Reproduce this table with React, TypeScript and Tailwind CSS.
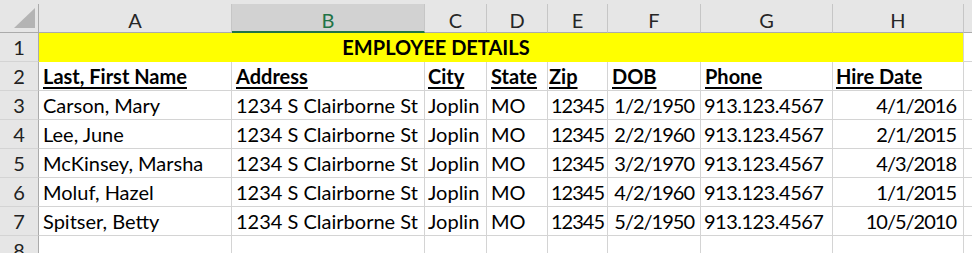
import React from 'react'

// Column widths include the 1px right gridline
const COLS = [
  { key: 'A', w: 'w-[193px]' },
  { key: 'B', w: 'w-[193px]' },
  { key: 'C', w: 'w-[62px]' },
  { key: 'D', w: 'w-[61px]' },
  { key: 'E', w: 'w-[60px]' },
  { key: 'F', w: 'w-[93px]' },
  { key: 'G', w: 'w-[132px]' },
  { key: 'H', w: 'w-[131px]' },
]

// per-column text alignment / padding (Lato digits run wider than Calibri's, so tighten them)
const ALIGN = [
  'justify-start pl-[4px]',
  'justify-start pl-[4px]',
  'justify-start pl-[3px]',
  'justify-start pl-[4px]',
  'justify-end pr-[3px] tracking-[-1px]',
  'justify-end pr-[6px] tracking-[-1px]',
  'justify-start pl-[3px] tracking-[-0.5px]',
  'justify-end pr-[7px] tracking-[-1px]',
]

const HEADINGS = ['Last, First Name', 'Address', 'City', 'State', 'Zip', 'DOB', 'Phone', 'Hire Date']
const HEAD_ALIGN = [
  'pl-[4px]',
  'pl-[4px]',
  'pl-[3px]',
  'pl-[4px]',
  'pl-[1px]',
  'pl-[4px]',
  'pl-[4px]',
  'pl-[3px]',
]

const EMPLOYEES = [
  ['Carson, Mary', '1234 S Clairborne St', 'Joplin', 'MO', '12345', '1/2/1950', '913.123.4567', '4/1/2016'],
  ['Lee, June', '1234 S Clairborne St', 'Joplin', 'MO', '12345', '2/2/1960', '913.123.4567', '2/1/2015'],
  ['McKinsey, Marsha', '1234 S Clairborne St', 'Joplin', 'MO', '12345', '3/2/1970', '913.123.4567', '4/3/2018'],
  ['Moluf, Hazel', '1234 S Clairborne St', 'Joplin', 'MO', '12345', '4/2/1960', '913.123.4567', '1/1/2015'],
  ['Spitser, Betty', '1234 S Clairborne St', 'Joplin', 'MO', '12345', '5/2/1950', '913.123.4567', '10/5/2010'],
]

function RowNum({ n }: { n: number }) {
  return (
    <div className="w-[39px] shrink-0 h-[29px] bg-[#e6e6e6] border-r border-r-[#ababab] border-b border-b-[#d4d4d4] flex items-center justify-center text-[#222] leading-[28px]">
      {n}
    </div>
  )
}

export default function App() {
  return (
    <div
      className="w-[972px] h-[253px] overflow-hidden bg-white text-[20px] text-black"
      style={{ fontFamily: 'Lato, "Noto Sans", sans-serif' }}
    >
      {/* ── Column headers ─────────────────────────────── */}
      <div className="flex h-[33px] bg-[#e6e6e6] pt-[4px]">
        <div className="relative w-[39px] shrink-0 h-[29px] border-r border-r-[#ababab] border-b border-b-[#ababab]">
          <svg className="absolute left-[14px] top-[4px]" width="22" height="21" viewBox="0 0 22 21">
            <polygon points="21,0 21,20 0,20" fill="#b4b4b4" />
          </svg>
        </div>
        {COLS.map((c) => (
          <div
            key={c.key}
            className={`${c.w} shrink-0 h-[29px] flex justify-center pt-[5px] leading-[23px] border-r border-r-[#c6c6c6] ${
              c.key === 'B'
                ? 'bg-[#d2d2d2] border-b-2 border-b-[#217346] text-[#217346]'
                : 'border-b border-b-[#ababab] text-[#262626]'
            }`}
          >
            {c.key}
          </div>
        ))}
        <div className="flex-1 h-[29px] border-b border-b-[#ababab]" />
      </div>

      {/* ── Row 1: merged title ────────────────────────── */}
      <div className="flex h-[29px]">
        <RowNum n={1} />
        <div className="w-[925px] shrink-0 h-[29px] bg-[#ffff00] border-r border-r-[#d4d4d4]">
          <div className="w-[794px] text-center font-bold leading-[29px]">EMPLOYEE DETAILS</div>
        </div>
        <div className="flex-1 border-b border-b-[#d4d4d4]" />
      </div>

      {/* ── Row 2: headings ────────────────────────────── */}
      <div className="flex h-[29px]">
        <RowNum n={2} />
        {COLS.map((c, i) => (
          <div
            key={c.key}
            className={`${c.w} shrink-0 h-[29px] flex items-center whitespace-nowrap border-r border-b border-[#d4d4d4] leading-[28px] ${HEAD_ALIGN[i]}`}
          >
            <span className="font-bold underline decoration-2 underline-offset-[3px]">{HEADINGS[i]}</span>
          </div>
        ))}
        <div className="flex-1 border-b border-b-[#d4d4d4]" />
      </div>

      {/* ── Data rows ──────────────────────────────────── */}
      {EMPLOYEES.map((row, r) => (
        <div key={r} className="flex h-[29px]">
          <RowNum n={r + 3} />
          {row.map((val, i) => (
            <div
              key={i}
              className={`${COLS[i].w} shrink-0 h-[29px] flex items-center whitespace-nowrap border-r border-b border-[#d4d4d4] leading-[28px] ${ALIGN[i]}`}
            >
              {val}
            </div>
          ))}
          <div className="flex-1 border-b border-b-[#d4d4d4]" />
        </div>
      ))}

      {/* ── Row 8 (cut off) ────────────────────────────── */}
      <div className="flex h-[29px]">
        <RowNum n={8} />
        {COLS.map((c) => (
          <div key={c.key} className={`${c.w} shrink-0 h-[29px] border-r border-b border-[#d4d4d4]`} />
        ))}
        <div className="flex-1 border-b border-b-[#d4d4d4]" />
      </div>
    </div>
  )
}
